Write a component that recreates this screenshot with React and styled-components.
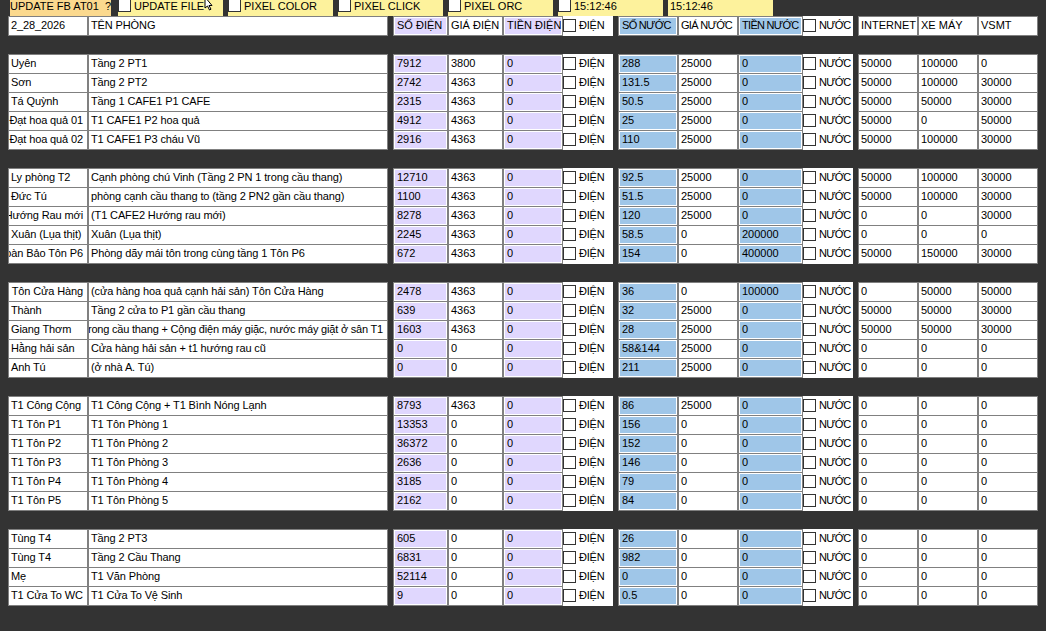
import styled, { createGlobalStyle } from "styled-components";

const GlobalStyle = createGlobalStyle`
  html, body {
    margin: 0;
    padding: 0;
    background: #333333;
    overflow: hidden;
  }
  body {
    font-family: "Liberation Sans", Arial, sans-serif;
    font-size: 11px;
    color: #000;
  }
`;

const Page = styled.div`
  width: 1046px;
  height: 631px;
  padding-left: 8px;
  box-sizing: border-box;
`;

const TopBar = styled.div`
  display: flex;
  height: 16px;
  gap: 5px;
  padding-left: 2px;
`;

const BarLabel = styled.div`
  display: flex;
  align-items: center;
  width: ${(p) => p.$width || 105}px;
  height: 16px;
  margin-right: ${(p) => p.$after || 0}px;
  background: ${(p) => p.$bg || "#fdf29c"};
  gap: 3px;
  white-space: pre;
  position: relative;
  box-sizing: border-box;
  padding-left: ${(p) => p.$pad || 0}px;
  padding-bottom: 4px;
`;

const Pointer = styled.svg`
  position: absolute;
  left: 86px;
  top: 0;
`;

const Check = styled.input.attrs({ type: "checkbox" })`
  appearance: none;
  display: block;
  flex: none;
  box-sizing: border-box;
  width: 13px;
  height: 13px;
  margin: 0;
  background: #fff;
  border: 1px solid #333;
`;

const BarCheck = styled(Check)`
  height: 12px;
  align-self: flex-start;
  border-top: none;
`;

const Group = styled.div`
  margin-bottom: 19px;
`;

const Row = styled.div`
  display: flex;
  gap: 5px;
  height: 19px;
`;

const Block = styled.div`
  display: grid;
  grid-template-columns: ${(p) => p.$cols};
  height: 19px;
`;

const Cell = styled.div`
  box-sizing: border-box;
  height: 20px;
  display: flex;
  align-items: center;
  justify-content: ${(p) => (p.$end ? "flex-end" : "flex-start")};
  overflow: hidden;
  white-space: nowrap;
  padding: 0 ${(p) => (p.$end ? 4 : 2)}px 2px 2px;
  border: 1px solid #808080;
  background: ${(p) => p.$tint || "#fff"};
  box-shadow: ${(p) => (p.$tint ? "inset 0 0 0 1px #fff" : "none")};
  letter-spacing: ${(p) => p.$spacing || 0}px;
  ${(p) => p.$tint && "padding-left: 3px;"}
`;

const CheckCell = styled.div`
  box-sizing: border-box;
  height: 20px;
  display: flex;
  align-items: center;
  gap: 3px;
  background: #fff;
  padding-bottom: 1px;
`;

const CheckText = styled.span`
  padding-bottom: 2px;
  letter-spacing: ${(p) => p.$spacing || 0}px;
`;

const LAVENDER = "#e0d7fe";
const BLUE = "#9fc6e8";

const NAME_COLS = "80px 300px";
const POWER_COLS = "55px 55px 60px 50px";
const WATER_COLS = "60px 60px 65px 50px";
const FEE_COLS = "60px 60px 60px";

// names that overflow their box and show only their right end
const END_ALIGNED = ["Đạt hoa quả 01", "Đạt hoa quả 02", "Hướng Rau mới", "Toàn Bảo Tôn P6", "Tôn Cửa Hàng"];

const header = ["2_28_2026", "TÊN PHÒNG", "SỐ ĐIỆN", "GIÁ ĐIỆN", "TIỀN ĐIỆN", "SỐ NƯỚC", "GIÁ NƯỚC", "TIỀN NƯỚC", "INTERNET", "XE MÁY", "VSMT"];

const groups = [
  [
    ["Uyên", "Tầng 2 PT1", "7912", "3800", "0", "288", "25000", "0", "50000", "100000", "0"],
    ["Sơn", "Tầng 2 PT2", "2742", "4363", "0", "131.5", "25000", "0", "50000", "100000", "30000"],
    ["Tá Quỳnh", "Tầng 1 CAFE1 P1 CAFE", "2315", "4363", "0", "50.5", "25000", "0", "50000", "50000", "30000"],
    ["Đạt hoa quả 01", "T1 CAFE1 P2 hoa quả", "4912", "4363", "0", "25", "25000", "0", "50000", "0", "50000"],
    ["Đạt hoa quả 02", "T1 CAFE1 P3 cháu Vũ", "2916", "4363", "0", "110", "25000", "0", "50000", "100000", "30000"],
  ],
  [
    ["Ly phòng T2", "Cạnh phòng chú Vinh (Tầng 2 PN 1 trong cầu thang)", "12710", "4363", "0", "92.5", "25000", "0", "50000", "100000", "30000"],
    ["Đức Tú", "phòng cạnh cầu thang to (tầng 2 PN2 gần cầu thang)", "1100", "4363", "0", "51.5", "25000", "0", "50000", "100000", "30000"],
    ["Hướng Rau mới", "(T1 CAFE2 Hướng rau mới)", "8278", "4363", "0", "120", "25000", "0", "0", "0", "30000"],
    ["Xuân (Lụa thịt)", "Xuân (Lụa thịt)", "2245", "4363", "0", "58.5", "0", "200000", "0", "0", "0"],
    ["Toàn Bảo Tôn P6", "Phòng dãy mái tôn trong cùng tầng 1 Tôn P6", "672", "4363", "0", "154", "0", "400000", "50000", "150000", "30000"],
  ],
  [
    ["Tôn Cửa Hàng", "(cửa hàng hoa quả cạnh hải sản) Tôn Cửa Hàng", "2478", "4363", "0", "36", "0", "100000", "0", "50000", "50000"],
    ["Thành", "Tầng 2 cửa to P1 gần cầu thang", "639", "4363", "0", "32", "25000", "0", "50000", "50000", "30000"],
    ["Giang Thơm", "Trong cầu thang + Cộng điện máy giặc, nước máy giặt ở sân T1", "1603", "4363", "0", "28", "25000", "0", "50000", "50000", "30000"],
    ["Hằng hải sản", "Cửa hàng hải sản + t1 hướng rau cũ", "0", "0", "0", "58&144", "25000", "0", "0", "0", "0"],
    ["Anh Tú", "(ở nhà A. Tú)", "0", "0", "0", "211", "25000", "0", "0", "0", "0"],
  ],
  [
    ["T1 Công Cộng", "T1 Công Cộng + T1 Bình Nóng Lạnh", "8793", "4363", "0", "86", "25000", "0", "0", "0", "0"],
    ["T1 Tôn P1", "T1 Tôn Phòng 1", "13353", "0", "0", "156", "0", "0", "0", "0", "0"],
    ["T1 Tôn P2", "T1 Tôn Phòng 2", "36372", "0", "0", "152", "0", "0", "0", "0", "0"],
    ["T1 Tôn P3", "T1 Tôn Phòng 3", "2636", "0", "0", "146", "0", "0", "0", "0", "0"],
    ["T1 Tôn P4", "T1 Tôn Phòng 4", "3185", "0", "0", "79", "0", "0", "0", "0", "0"],
    ["T1 Tôn P5", "T1 Tôn Phòng 5", "2162", "0", "0", "84", "0", "0", "0", "0", "0"],
  ],
  [
    ["Tùng T4", "Tầng 2 PT3", "605", "0", "0", "26", "0", "0", "0", "0", "0"],
    ["Tùng T4", "Tầng 2 Cầu Thang", "6831", "0", "0", "982", "0", "0", "0", "0", "0"],
    ["Mẹ", "T1 Văn Phòng", "52114", "0", "0", "0", "0", "0", "0", "0", "0"],
    ["T1 Cửa To WC", "T1 Cửa To Vệ Sinh", "9", "0", "0", "0.5", "0", "0", "0", "0", "0"],
  ],
];

function SheetRow({ cells, isHeader }) {
  const [name, room, soDien, giaDien, tienDien, soNuoc, giaNuoc, tienNuoc, internet, xeMay, vsmt] = cells;
  const tight = isHeader ? -0.7 : 0;
  const longRoom = room.length > 55;
  return (
    <Row>
      <Block $cols={NAME_COLS}>
        <Cell $end={END_ALIGNED.includes(name)} $spacing={-0.12}>{name}</Cell>
        <Cell $end={longRoom} $spacing={longRoom ? -0.2 : -0.12}>{room}</Cell>
      </Block>
      <Block $cols={POWER_COLS}>
        <Cell $tint={LAVENDER}>{soDien}</Cell>
        <Cell>{giaDien}</Cell>
        <Cell $tint={LAVENDER}>{tienDien}</Cell>
        <CheckCell>
          <Check />
          <CheckText $spacing={-0.2}>ĐIỆN</CheckText>
        </CheckCell>
      </Block>
      <Block $cols={WATER_COLS}>
        <Cell $tint={BLUE} $spacing={tight}>{soNuoc}</Cell>
        <Cell $spacing={tight}>{giaNuoc}</Cell>
        <Cell $tint={BLUE} $spacing={tight}>{tienNuoc}</Cell>
        <CheckCell>
          <Check />
          <CheckText $spacing={-0.8}>NƯỚC</CheckText>
        </CheckCell>
      </Block>
      <Block $cols={FEE_COLS}>
        <Cell>{internet}</Cell>
        <Cell>{xeMay}</Cell>
        <Cell>{vsmt}</Cell>
      </Block>
    </Row>
  );
}

export default function App() {
  return (
    <Page>
      <GlobalStyle />
      <TopBar>
        <BarLabel $width={101} $bg="#fbd98e" $after={2}>UPDATE FB AT01  ?</BarLabel>
        <BarLabel>
          <BarCheck />
          UPDATE FILE
          <Pointer width="10" height="13" viewBox="0 0 10 13">
            <path d="M1 -3 L1 8 L3.5 6 L5.5 10 L7 9.2 L5 5.5 L8 5.5 Z" fill="#fff" stroke="#000" strokeWidth="1" />
          </Pointer>
        </BarLabel>
        <BarLabel>
          <BarCheck />
          PIXEL COLOR
        </BarLabel>
        <BarLabel>
          <BarCheck />
          PIXEL CLICK
        </BarLabel>
        <BarLabel>
          <BarCheck />
          PIXEL ORC
        </BarLabel>
        <BarLabel>
          <BarCheck />
          15:12:46
        </BarLabel>
        <BarLabel $pad={2}>15:12:46</BarLabel>
      </TopBar>
      <Group>
        <SheetRow cells={header} isHeader />
      </Group>
      {groups.map((rows, i) => (
        <Group key={i}>
          {rows.map((cells, j) => (
            <SheetRow key={j} cells={cells} />
          ))}
        </Group>
      ))}
    </Page>
  );
}
